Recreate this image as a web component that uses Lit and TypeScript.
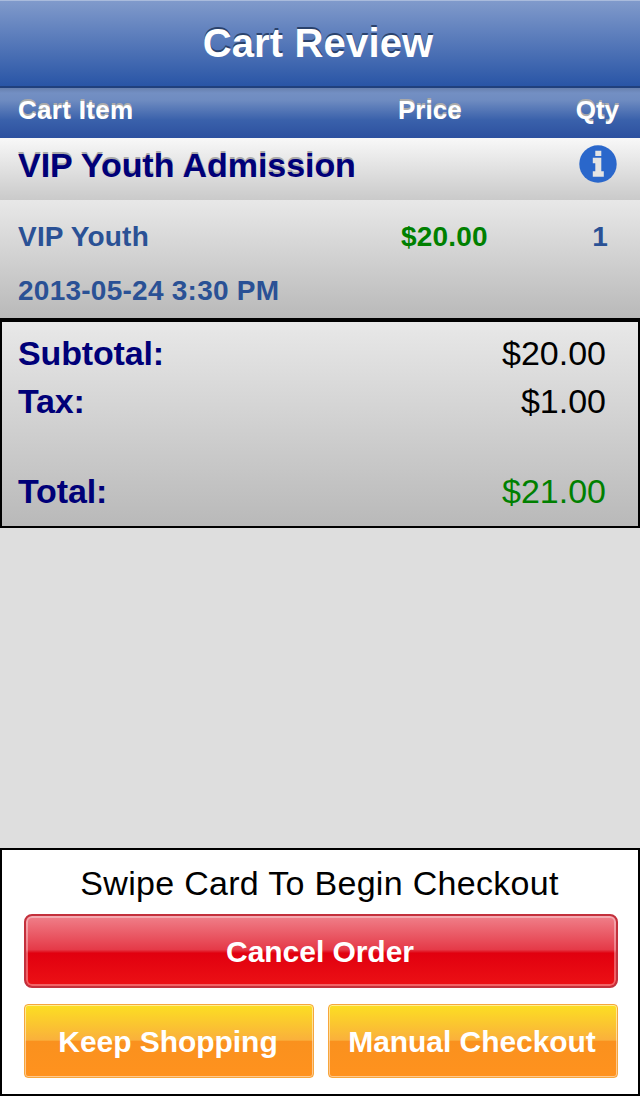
import { LitElement, html, css, svg } from "lit";
import { customElement } from "lit/decorators.js";

@customElement("info-icon")
class InfoIcon extends LitElement {
  static styles = css`
    :host { display: block; width: 38px; height: 38px; }
    svg { display: block; }
  `;
  render() {
    return html`<svg width="38" height="38" viewBox="0 0 38 38">
      ${svg`<circle cx="19" cy="19" r="18.7" fill="#2a67cb"/>
      <path fill="#e4e4e4" d="M16.3 5.7h6v5.4h-6zM13.8 12.7h8.5v13.5h2.5v5.5h-11v-5.5h2.5v-8h-2.5z"/>`}
    </svg>`;
  }
}

@customElement("glossy-button")
class GlossyButton extends LitElement {
  static properties = { tone: {}, label: {} };
  declare tone: string;
  declare label: string;
  static styles = css`
    :host { display: block; flex: 1 1 0; }
    button {
      display: block; width: 100%; height: 74px; margin: 0; padding: 1px 2px 0 0;
      box-sizing: border-box; font: bold 30px/70px "Liberation Sans", Arial, sans-serif;
      color: #fff; white-space: nowrap; letter-spacing: -0.05px;
    }
    .red {
      border: 2px solid #c3303c; border-radius: 8px;
      background: linear-gradient(#f0808a 0%, #e53a48 48%, #e1000f 53%, #ec1115 100%);
      box-shadow: inset 0 0 0 2px rgba(255, 255, 255, 0.35);
    }
    .orange {
      border: 1px solid #f7a63c; border-radius: 4px;
      background: linear-gradient(#fcdf22 0%, #fab03c 49%, #fa911e 50%, #ff921e 100%);
      box-shadow: inset 0 0 0 1px rgba(255, 255, 255, 0.5);
    }
  `;
  render() {
    return html`<button class=${this.tone}>${this.label}</button>`;
  }
}

@customElement("app-root")
class AppRoot extends LitElement {
  static styles = css`
    :host {
      display: flex; flex-direction: column; height: 1096px; box-sizing: border-box;
      background: #dedede; font-family: "Liberation Sans", Arial, sans-serif; color: #000;
    }
    .title {
      height: 88px; box-sizing: border-box; border-top: 1px solid #a9bbdc; border-bottom: 2px solid #20407c;
      background: linear-gradient(#809acb, #2955a6);
      font-size: 40px; font-weight: bold; line-height: 84px; text-align: center; color: #fff;
      text-shadow: 0 -2px 0 #2a426c; padding-right: 4px; letter-spacing: 0.15px;
    }
    .heads, .item, .group {
      display: grid; grid-template-columns: 380px 1fr auto; box-sizing: border-box;
      padding: 0 22px 0 18px; font-weight: bold;
    }
    .heads {
      height: 50px; padding-right: 21px; font-size: 26px; line-height: 44px; color: #fff; text-shadow: 0 -2px 0 #aaa;
      background: linear-gradient(#6780ae 0, #738fc3 5px, #6f8cc1 12px, #3a61ab 32px, #2c509f 50px);
    }
    .heads .name { letter-spacing: 0.3px; }
    .group {
      grid-template-columns: 1fr auto; height: 62px; padding-right: 23px; letter-spacing: -0.05px;
      font-size: 34px; line-height: 54px; color: #000078; text-shadow: 0 -2px 0 #aaa;
      background: linear-gradient(#f8f8f8, #cacaca);
    }
    .group info-icon { margin-top: 7px; }
    .item {
      height: 120px; border-bottom: 2px solid #000; padding-right: 32px; padding-top: 10px;
      grid-template-columns: 383px 1fr auto; grid-template-rows: 54px 54px;
      font-size: 28px; line-height: 54px; color: #2a5195; letter-spacing: 0.2px;
      background: linear-gradient(#e8e8e8, #b9b9b9);
    }
    .price { color: #008000; }
    .date { letter-spacing: 0.25px; }
    .totals {
      height: 208px; box-sizing: border-box; border: 2px solid #000; padding: 7px 32px 0 16px;
      background: linear-gradient(#e8e8e8, #b9b9b9); font-size: 34px;
    }
    .line { display: flex; justify-content: space-between; height: 48px; line-height: 48px; }
    .line.total { margin-top: 42px; }
    .line b { color: #000078; letter-spacing: -0.15px; }
    .total span { color: #008000; }
    .footer {
      margin-top: auto; height: 248px; box-sizing: border-box; border: 2px solid #000;
      background: #fff; padding: 0 20px 0 22px;
    }
    .prompt { height: 64px; line-height: 67px; font-size: 34px; text-align: center; letter-spacing: 0.3px; white-space: nowrap; padding-right: 3px; }
    .actions { display: flex; gap: 14px; margin-top: 16px; }
  `;
  render() {
    return html`
      <div class="title">Cart Review</div>
      <div class="heads"><span class="name">Cart Item</span><span>Price</span><span>Qty</span></div>
      <div class="group"><span>VIP Youth Admission</span><info-icon></info-icon></div>
      <div class="item">
        <span>VIP Youth</span><span class="price">$20.00</span><span>1</span>
        <span class="date">2013-05-24 3:30 PM</span>
      </div>
      <div class="totals">
        <div class="line"><b>Subtotal:</b><span>$20.00</span></div>
        <div class="line"><b>Tax:</b><span>$1.00</span></div>
        <div class="line total"><b>Total:</b><span>$21.00</span></div>
      </div>
      <div class="footer">
        <div class="prompt">Swipe Card To Begin Checkout</div>
        <glossy-button tone="red" label="Cancel Order"></glossy-button>
        <div class="actions">
          <glossy-button tone="orange" label="Keep Shopping"></glossy-button>
          <glossy-button tone="orange" label="Manual Checkout"></glossy-button>
        </div>
      </div>
    `;
  }
}
